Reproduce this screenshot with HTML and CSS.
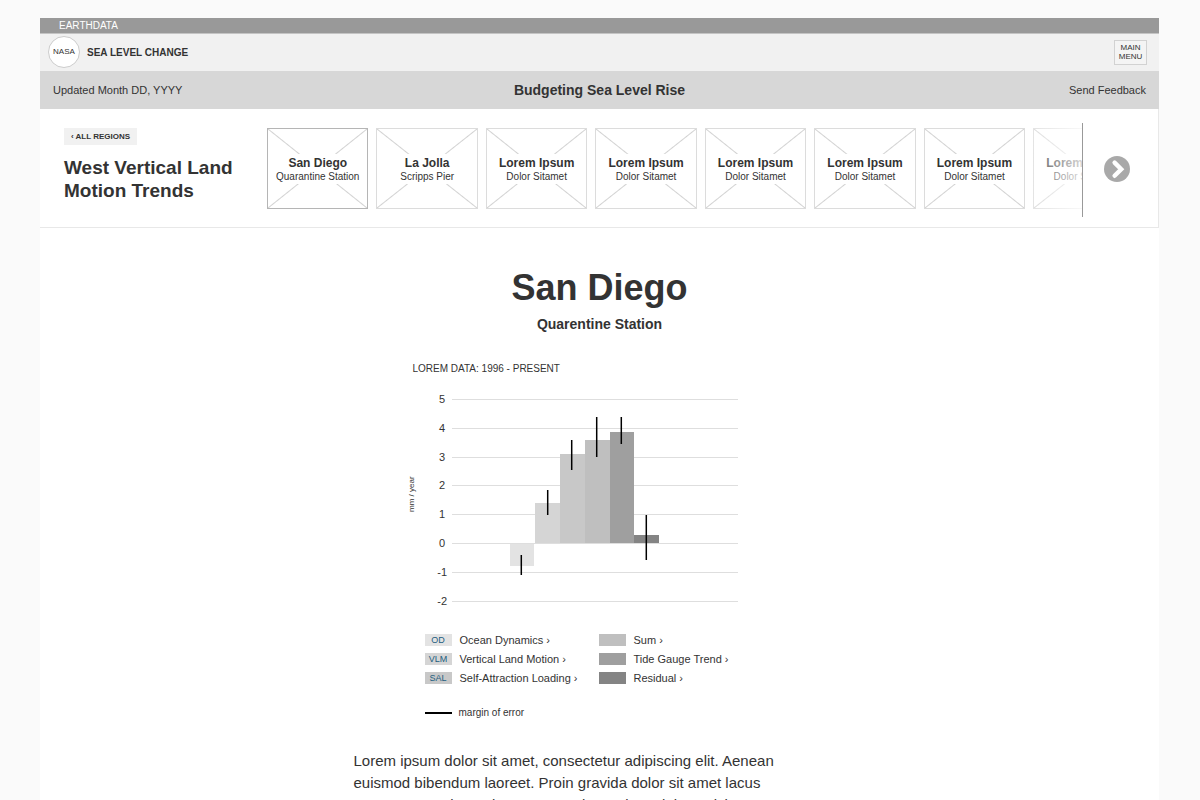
FILE: index.html
```html
<!DOCTYPE html>
<html lang="en">
<head>
    <meta charset="UTF-8">
    <title>Budgeting Sea Level Rise</title>
    <link rel="stylesheet" href="styles.css">
</head>
<body>
<div class="page">
    <div class="topbar"><a href="#">EARTHDATA</a></div>
    <header class="header">
        <a class="logo" href="#">NASA</a>
        <a class="site_name" href="#">SEA LEVEL CHANGE</a>
        <button type="button" class="btn_menu">MAIN<br>MENU</button>
    </header>
    <div class="subbar">
        <span class="updated">Updated Month DD, YYYY</span>
        <h2>Budgeting Sea Level Rise</h2>
        <a class="feedback" href="#">Send Feedback</a>
    </div>

    <!-- region picker -->
    <section class="regions">
        <div class="region_title">
            <a class="btn_back" href="#">‹ ALL REGIONS</a>
            <h3>West Vertical Land Motion Trends</h3>
        </div>
        <nav class="strip">
            <a class="card active" href="#"><span class="label"><b>San Diego</b>Quarantine Station</span></a>
            <a class="card" href="#"><span class="label"><b>La Jolla</b>Scripps Pier</span></a>
            <a class="card" href="#"><span class="label"><b>Lorem Ipsum</b>Dolor Sitamet</span></a>
            <a class="card" href="#"><span class="label"><b>Lorem Ipsum</b>Dolor Sitamet</span></a>
            <a class="card" href="#"><span class="label"><b>Lorem Ipsum</b>Dolor Sitamet</span></a>
            <a class="card" href="#"><span class="label"><b>Lorem Ipsum</b>Dolor Sitamet</span></a>
            <a class="card" href="#"><span class="label"><b>Lorem Ipsum</b>Dolor Sitamet</span></a>
            <a class="card" href="#"><span class="label"><b>Lorem Ipsum</b>Dolor Sitamet</span></a>
        </nav>
        <button type="button" class="btn_next" aria-label="Next regions">
            <svg width="26" height="26" viewBox="0 0 26 26">
                <circle cx="13" cy="13" r="13" fill="#a9a9a9"/>
                <path d="M10.6 6.6 L17.2 13.2 L10.6 19.8" fill="none" stroke="#fff" stroke-width="4.4" stroke-linecap="round"/>
            </svg>
        </button>
    </section>

    <main class="article">
        <h1>San Diego</h1>
        <h2 class="station">Quarentine Station</h2>
        <figure class="figure">
            <figcaption>LOREM DATA: 1996 - PRESENT</figcaption>
            <svg class="chart" width="331" height="220" viewBox="0 0 331 220">
                <g class="grid">
                    <rect x="44" y="9" width="286" height="1"/>
                    <rect x="44" y="38" width="286" height="1"/>
                    <rect x="44" y="67" width="286" height="1"/>
                    <rect x="44" y="95" width="286" height="1"/>
                    <rect x="44" y="124" width="286" height="1"/>
                    <rect x="44" y="153" width="286" height="1"/>
                    <rect x="44" y="182" width="286" height="1"/>
                    <rect x="44" y="211" width="286" height="1"/>
                </g>
                <g class="ticks">
                    <text x="37" y="13">5</text>
                    <text x="37" y="42">4</text>
                    <text x="37" y="71">3</text>
                    <text x="37" y="99">2</text>
                    <text x="37" y="128">1</text>
                    <text x="37" y="157">0</text>
                    <text x="39" y="186">-1</text>
                    <text x="39" y="215">-2</text>
                </g>
                <text class="unit" transform="translate(6 122) rotate(-90)">mm / year</text>
                <!-- bars -->
                <rect x="102" y="154" width="24" height="22" fill="#e3e3e3"/>
                <rect x="127" y="113" width="25" height="40" fill="#d5d5d5"/>
                <rect x="152" y="64" width="25" height="89" fill="#c8c8c8"/>
                <rect x="177" y="50" width="25" height="103" fill="#bfbfbf"/>
                <rect x="202" y="42" width="24" height="111" fill="#9f9f9f"/>
                <rect x="226" y="145" width="25" height="8" fill="#848484"/>
                <!-- margins of error -->
                <g class="errors">
                    <path d="M113.3 165V185"/>
                    <path d="M139.7 100V125"/>
                    <path d="M163.7 50V80"/>
                    <path d="M188.7 27V67"/>
                    <path d="M213.3 27V54"/>
                    <path d="M238.3 125V170"/>
                </g>
            </svg>
            <div class="legend">
                <ul>
                    <li><span class="swatch od">OD</span><a href="#">Ocean Dynamics ›</a></li>
                    <li><span class="swatch vlm">VLM</span><a href="#">Vertical Land Motion ›</a></li>
                    <li><span class="swatch sal">SAL</span><a href="#">Self-Attraction Loading ›</a></li>
                </ul>
                <ul>
                    <li><span class="swatch sum"></span><a href="#">Sum ›</a></li>
                    <li><span class="swatch tide"></span><a href="#">Tide Gauge Trend ›</a></li>
                    <li><span class="swatch residual"></span><a href="#">Residual ›</a></li>
                </ul>
            </div>
            <div class="error_key"><span class="line"></span>margin of error</div>
        </figure>
        <p>Lorem ipsum dolor sit amet, consectetur adipiscing elit. Aenean euismod bibendum laoreet. Proin gravida dolor sit amet lacus accumsan et viverra justo commodo. Proin sodales pulvinar tempor.</p>
    </main>
</div>
</body>
</html>
```
FILE: styles.css
```css
* {
    margin: 0;
    padding: 0;
    box-sizing: border-box;
}
body {
    background-color: #fafafa;
    color: #333;
    font-family: "Liberation Sans", Arial, sans-serif;
    font-size: 11px;
}
a {
    color: inherit;
    text-decoration: none;
}
button {
    font-family: inherit;
    color: inherit;
    cursor: pointer;
}
ul {
    list-style: none;
}
.page {
    margin: 18px 41px 0 40px;
    background-color: #fff;
}

.topbar {
    height: 16px;
    line-height: 16px;
    padding-left: 19px;
    background-color: #999;
    border-bottom: 1px solid #c4c4c4;
    color: #fff;
    font-size: 10px;
}
.header {
    display: flex;
    align-items: center;
    height: 37px;
    padding: 0 12px 1px 8px;
    background-color: #f1f1f1;
}
.logo {
    width: 32px;
    height: 32px;
    line-height: 30px;
    border: 1px solid #ccc;
    border-radius: 50%;
    background-color: #fff;
    font-size: 8px;
    text-align: center;
}
.site_name {
    margin-left: 7px;
    font-size: 10px;
    font-weight: bold;
}
.btn_menu {
    width: 33px;
    height: 25px;
    margin-left: auto;
    border: 1px solid #d2d2d2;
    background-color: #f4f4f4;
    font-size: 8px;
    line-height: 9px;
}
.subbar {
    display: grid;
    grid-template-columns: 1fr auto 1fr;
    align-items: center;
    height: 38px;
    padding: 0 13px;
    background-color: #d7d7d7;
}
.subbar h2 {
    font-size: 14px;
}
.feedback {
    text-align: right;
}

.regions {
    display: flex;
    align-items: flex-start;
    padding: 14px 0 10px 24px;
    border: solid #e8e8e8;
    border-width: 0 1px 1px 0;
}
.region_title {
    width: 203px;
    flex-shrink: 0;
    padding-top: 5px;
}
.btn_back {
    display: block;
    width: fit-content;
    padding: 0 7px;
    background-color: #f1f1f1;
    font-size: 8px;
    font-weight: bold;
    line-height: 17px;
}
.region_title h3 {
    max-width: 180px;
    margin-top: 11px;
    font-size: 19px;
    line-height: 23px;
}
.strip {
    position: relative;
    display: grid;
    grid-auto-flow: column;
    grid-auto-columns: 12.45%;
    gap: 8px;
    align-items: start;
    flex: 1;
    min-width: 0;
    height: 94px;
    padding-top: 5px;
    overflow: hidden;
    border-right: 1px solid #999;
}
/* fade of the last card */
.strip::after {
    content: "";
    position: absolute;
    top: 0;
    right: 0;
    width: 50px;
    height: 100%;
    background-image: linear-gradient(to right, rgba(255, 255, 255, 0.2), rgba(255, 255, 255, 0.8));
}
.card {
    display: flex;
    align-items: center;
    height: 81px;
    border: 1px solid #dcdcdc;
    background-image:
        linear-gradient(to top right, transparent calc(50% - 1px), #d2d2d2 50%, transparent calc(50% + 1px)),
        linear-gradient(to bottom right, transparent calc(50% - 1px), #d2d2d2 50%, transparent calc(50% + 1px));
}
.active {
    border-color: #b5b5b5;
}
.label {
    flex: 1;
    padding: 3px 0 1px;
    background-color: #fff;
    font-size: 10px;
    line-height: 13px;
    text-align: center;
    white-space: nowrap;
}
.label b {
    display: block;
    font-size: 12px;
}
.btn_next {
    width: 26px;
    height: 26px;
    margin: 33px 28px 0 21px;
    border-style: none;
    background-color: transparent;
}
.btn_next svg {
    display: block;
}

.article {
    max-width: 492px;
    margin: 0 auto;
    padding-top: 39px;
}
h1 {
    font-size: 36px;
    line-height: 42px;
    text-align: center;
}
.station {
    margin-top: 6px;
    font-size: 14px;
    line-height: 18px;
    text-align: center;
}
.figure {
    padding: 30px 0 0 54px;
}
figcaption {
    padding-left: 5px;
    font-size: 10px;
    line-height: 12px;
}
.chart {
    display: block;
    margin-top: 15px;
}
.grid {
    fill: #dedede;
}
.ticks {
    fill: #333;
    font-size: 11px;
    text-anchor: end;
}
.unit {
    fill: #333;
    font-size: 8px;
}
.errors {
    stroke: #000;
    stroke-width: 1.5;
}
.legend {
    display: flex;
    padding: 20px 0 0 17px;
}
.legend ul {
    width: 174px;
}
.legend li {
    display: flex;
    align-items: center;
    height: 19px;
}
.swatch {
    width: 27px;
    height: 12px;
    margin-right: 8px;
    color: #1d5d80;
    font-size: 9px;
    line-height: 12px;
    text-align: center;
}
.od {
    background-color: #e3e3e3;
}
.vlm {
    background-color: #d5d5d5;
}
.sal {
    background-color: #c8c8c8;
}
.sum {
    background-color: #bfbfbf;
}
.tide {
    background-color: #9f9f9f;
}
.residual {
    background-color: #848484;
}
.error_key {
    display: flex;
    align-items: center;
    margin: 19px 0 0 17px;
    font-size: 10px;
    line-height: 14px;
}
.line {
    width: 27px;
    margin-right: 7px;
    border-top: 2px solid #000;
}
.article p {
    padding: 30px 50px 40px 0;
    font-size: 15px;
    line-height: 22px;
}
```
